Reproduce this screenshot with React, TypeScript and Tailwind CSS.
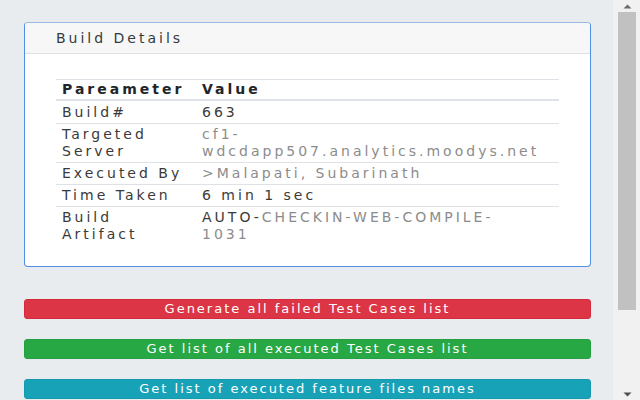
import React from "react";

const rows = [
  { p: "Build#", v: [{ t: "663" }] },
  {
    p: "Targeted Server",
    v: [{ t: "cf1-", dim: true }, { t: "wdcdapp507.analytics.moodys.net", dim: true, br: true }],
  },
  { p: "Executed By", v: [{ t: ">Malapati, Subarinath", dim: true }] },
  { p: "Time Taken", v: [{ t: "6 min 1 sec" }] },
  {
    p: "Build Artifact",
    v: [{ t: "AUTO-" }, { t: "CHECKIN-WEB-COMPILE-", dim: true }, { t: "1031", dim: true, br: true }],
  },
];

const App = () => {
  return (
    <div className="flex h-[400px] w-[640px] overflow-hidden bg-[#e9ecef] font-['DejaVu_Sans',sans-serif]">
      <div className="w-[613px] shrink-0 pl-[24px] pr-[22px] pt-[22px]">
        <div className="overflow-hidden rounded-[4px] border border-[#4f8fe6] border-t-[#9ab8e0] bg-white">
          <div className="flex h-[31px] items-center border-b border-[#dfe2e5] bg-[#f7f7f7] px-[31px] text-[14px] tracking-[3px] text-[#343a40]">
            Build Details
          </div>
          <div className="px-[31px] pb-[21px] pt-[25px]">
            <table className="w-full table-fixed border-separate border-spacing-0 text-[14px] leading-[17px] tracking-[3px] text-[#3a3a3a]">
              <colgroup>
                <col className="w-[140px]" />
                <col />
              </colgroup>
              <thead>
                <tr>
                  <th className="border-t border-b-2 border-[#dee2e6] px-[6px] py-[1px] text-left font-bold text-[#212529]">
                    Pareameter
                  </th>
                  <th className="border-t border-b-2 border-[#dee2e6] px-[6px] py-[1px] text-left font-bold text-[#212529]">
                    Value
                  </th>
                </tr>
              </thead>
              <tbody>
                {rows.map((r, i) => (
                  <tr key={r.p}>
                    <td className={`${i === 0 ? "pt-[3px]" : "border-t pt-[2px]"} border-[#dee2e6] px-[6px] pb-[2px] align-top`}>{r.p}</td>
                    <td className={`${i === 0 ? "pt-[3px]" : "border-t pt-[2px]"} border-[#dee2e6] px-[6px] pb-[2px] align-top`}>
                      <div className="overflow-hidden whitespace-nowrap">
                        {r.v.map((s, k) => (
                          <React.Fragment key={k}>
                            {s.br && <br />}
                            <span className={s.dim ? "text-[#8c8c8c]" : ""}>{s.t}</span>
                          </React.Fragment>
                        ))}
                      </div>
                    </td>
                  </tr>
                ))}
              </tbody>
            </table>
          </div>
        </div>

        <div className="mt-[32px] flex flex-col gap-[20px] text-[13px] leading-[18px] tracking-[2px] text-white">
          <button className="h-[20px] rounded-[3px] border border-[#d42a3b] bg-[#dc3545]">
            Generate all failed Test Cases list
          </button>
          <button className="h-[20px] rounded-[3px] border border-[#24a043] bg-[#28a745]">
            Get list of all executed Test Cases list
          </button>
          <button className="h-[20px] rounded-[3px] border border-[#1599ad] bg-[#17a2b8]">
            Get list of executed feature files names
          </button>
        </div>
      </div>

      <div className="flex w-[27px] shrink-0 flex-col bg-[#f1f1f1]">
        <div className="flex h-[12px] items-center justify-center">
          <svg width="9" height="5" viewBox="0 0 9 5" className="ml-[2px]">
            <path d="M4.5 0.5 L8.5 4.5 L0.5 4.5 Z" fill="#6a6a6a" />
          </svg>
        </div>
        <div className="ml-[5px] h-[298px] w-[18px] bg-[#c1c1c1]" />
        <div className="flex-1" />
        <div className="flex h-[12px] items-center justify-center">
          <svg width="9" height="5" viewBox="0 0 9 5" className="ml-[2px]">
            <path d="M0.5 0.5 L8.5 0.5 L4.5 4.5 Z" fill="#505050" />
          </svg>
        </div>
      </div>
    </div>
  );
};

export default App;
